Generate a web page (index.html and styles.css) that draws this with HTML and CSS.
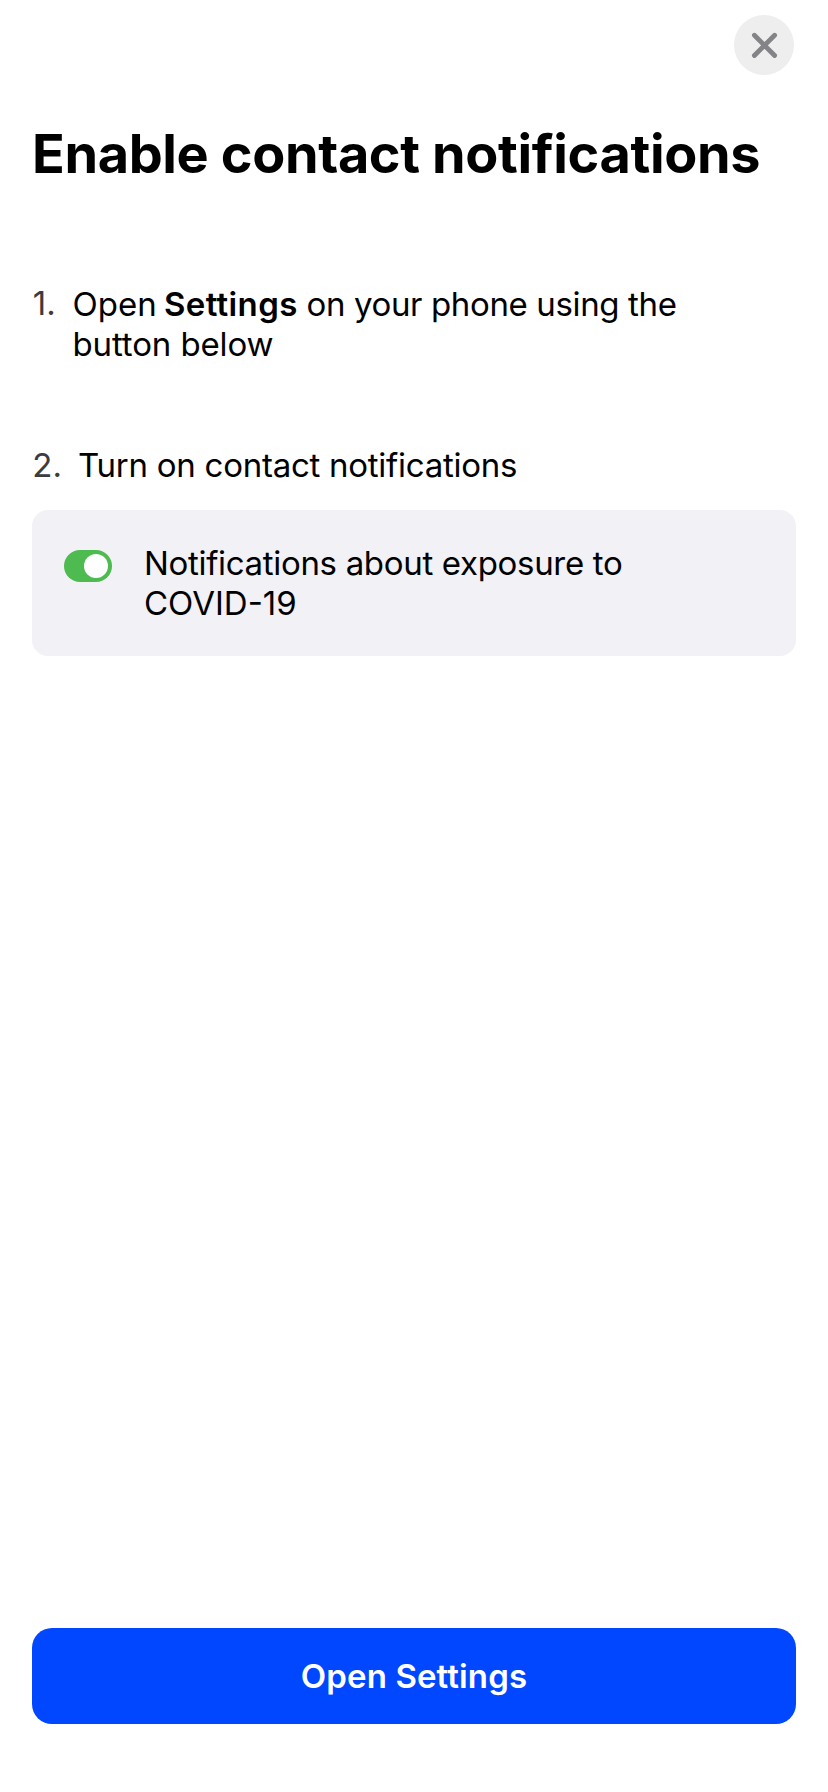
FILE: index.html
```
<!DOCTYPE html>
<html lang="en">
<head>
<meta charset="utf-8">
<title>Enable contact notifications</title>
<link rel="stylesheet" href="styles.css">
</head>
<body>
<main class="screen">
  <header class="topbar">
    <button class="close" aria-label="Close">
      <svg width="60" height="60" viewBox="0 0 60 60"><path d="M20.4 20.3 40.6 40.5M40.6 20.3 20.4 40.5" stroke="#848488" stroke-width="4.8" stroke-linecap="round" fill="none"/></svg>
    </button>
  </header>
  <h1 class="title">Enable contact notifications</h1>
  <section class="step">
    <span class="marker">1.</span>
    <p class="text"><span class="line"><span class="lead">Open </span><b class="strong">Settings</b><span class="tight"> on your phone using the</span></span> <span class="line below">button below</span></p>
  </section>
  <section class="step second">
    <span class="marker wide">2.</span>
    <p class="text turn">Turn on contact notifications</p>
  </section>
  <section class="card">
    <span class="toggle" role="switch" aria-checked="true"><span class="knob"></span></span>
    <p class="text"><span class="line exposure">Notifications about exposure to</span> <span class="line">COVID-19</span></p>
  </section>
  <button class="primary">Open Settings</button>
</main>
</body>
</html>
```
FILE: styles.css
```
* { box-sizing: border-box; }
body {
  margin: 0;
  background: #fff;
  color: #000;
  font: 400 33px/40px Inter, "Liberation Sans", sans-serif;
}
button { border: 0; padding: 0; font: inherit; }
.screen {
  display: flex;
  flex-direction: column;
  height: 1792px;
  padding: 15px 32px 68px;
}
.topbar {
  display: flex;
  justify-content: flex-end;
  padding-right: 2px;
}
.close {
  width: 60px;
  height: 60px;
  border-radius: 50%;
  background: #eee;
}
.close svg { display: block; }
.title {
  margin: 46px 0 0;
  font-size: 54px;
  line-height: 65px;
  font-weight: 700;
  letter-spacing: -0.37px;
  white-space: nowrap;
}
.step {
  display: flex;
  margin-top: 98px;
}
.step.second { margin-top: 81px; }
.marker {
  width: 40.5px;
  margin-top: -1px;
  padding-left: 0.8px;
  color: #3c3c3e;
}
.marker.wide {
  width: 46px;
  margin-top: 0;
  padding-left: 0.3px;
}
.text {
  margin: 0;
  white-space: nowrap;
}
.line { display: block; }
.lead { word-spacing: -2px; }
.strong {
  font-weight: 600;
  letter-spacing: 0.35px;
}
.tight { letter-spacing: -0.37px; }
.below { letter-spacing: -0.12px; }
.turn { letter-spacing: -0.26px; }
.exposure { letter-spacing: -0.32px; }
.card {
  display: flex;
  gap: 32px;
  margin-top: 25px;
  padding: 33px 32px;
  border-radius: 16px;
  background: #f2f1f6;
}
.toggle {
  display: flex;
  justify-content: flex-end;
  width: 48px;
  height: 32px;
  margin-top: 7px;
  padding: 4px;
  border-radius: 16px;
  background: #4dbb4f;
}
.knob {
  width: 24px;
  height: 24px;
  border-radius: 50%;
  background: #fff;
}
.primary {
  height: 96px;
  margin-top: auto;
  border-radius: 20px;
  background: #0047ff;
  color: #fff;
  font-weight: 600;
  letter-spacing: 0.12px;
}
```
